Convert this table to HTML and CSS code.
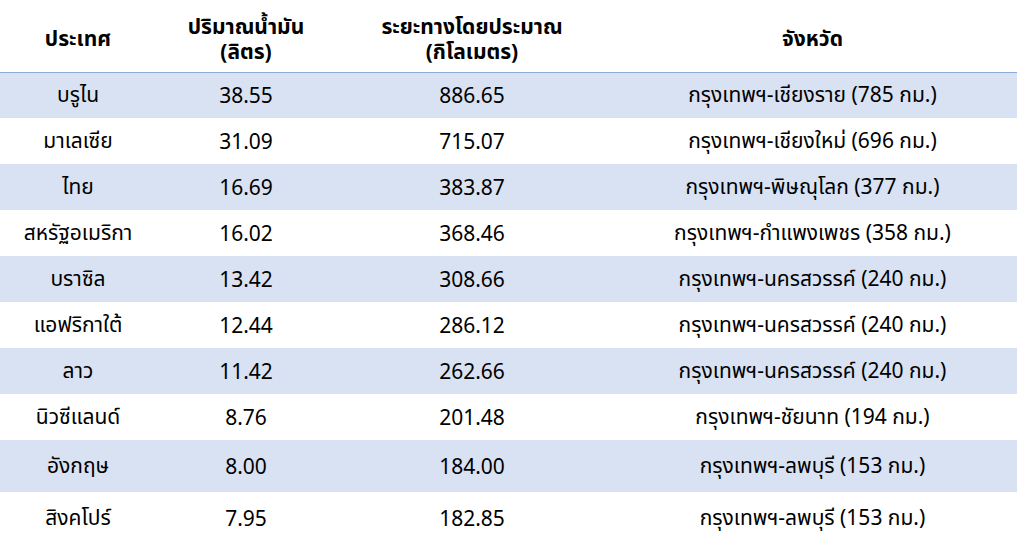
FILE: index.html
```html
<!DOCTYPE html>
<html lang="th">
<head>
<meta charset="utf-8">
<title>ปริมาณน้ำมัน</title>
<link rel="stylesheet" href="styles.css">
</head>
<body>
<table class="data">
  <colgroup>
    <col class="c1"><col class="c2"><col class="c3"><col class="c4">
  </colgroup>
  <thead>
    <tr>
      <th>ประเทศ</th>
      <th>ปริมาณน้ำมัน<br>(ลิตร)</th>
      <th>ระยะทางโดยประมาณ<br>(กิโลเมตร)</th>
      <th>จังหวัด</th>
    </tr>
  </thead>
  <tbody>
    <tr class="band"><td>บรูไน</td><td>38.55</td><td>886.65</td><td>กรุงเทพฯ-เชียงราย (785 กม.)</td></tr>
    <tr><td>มาเลเซีย</td><td>31.09</td><td>715.07</td><td>กรุงเทพฯ-เชียงใหม่ (696 กม.)</td></tr>
    <tr class="band"><td>ไทย</td><td>16.69</td><td>383.87</td><td>กรุงเทพฯ-พิษณุโลก (377 กม.)</td></tr>
    <tr><td>สหรัฐอเมริกา</td><td>16.02</td><td>368.46</td><td>กรุงเทพฯ-กำแพงเพชร (358 กม.)</td></tr>
    <tr class="band"><td>บราซิล</td><td>13.42</td><td>308.66</td><td>กรุงเทพฯ-นครสวรรค์ (240 กม.)</td></tr>
    <tr><td>แอฟริกาใต้</td><td>12.44</td><td>286.12</td><td>กรุงเทพฯ-นครสวรรค์ (240 กม.)</td></tr>
    <tr class="band"><td>ลาว</td><td>11.42</td><td>262.66</td><td>กรุงเทพฯ-นครสวรรค์ (240 กม.)</td></tr>
    <tr><td>นิวซีแลนด์</td><td>8.76</td><td>201.48</td><td>กรุงเทพฯ-ชัยนาท (194 กม.)</td></tr>
    <tr class="band tall"><td>อังกฤษ</td><td>8.00</td><td>184.00</td><td>กรุงเทพฯ-ลพบุรี (153 กม.)</td></tr>
    <tr class="tall"><td>สิงคโปร์</td><td>7.95</td><td>182.85</td><td>กรุงเทพฯ-ลพบุรี (153 กม.)</td></tr>
  </tbody>
</table>
</body>
</html>
```
FILE: styles.css
```css
html, body {
  margin: 0;
  padding: 0;
  background: #ffffff;
}
body {
  font-family: "Noto Sans", "Noto Sans Thai", "DejaVu Sans", sans-serif;
  font-size: 21px;
  color: #000000;
}
.data {
  width: 1017px;
  border-collapse: collapse;
  table-layout: fixed;
}
.c1 { width: 156px; }
.c2 { width: 180px; }
.c3 { width: 272px; }
.c4 { width: 409px; }
.data th,
.data td {
  padding: 0;
  text-align: center;
  vertical-align: middle;
}
.data thead tr {
  height: 72px;
}
.data th {
  font-weight: bold;
  line-height: 25px;
  padding-top: 6px;
  border-bottom: 1px solid #8eaadb;
}
.data tbody tr {
  height: 46px;
}
.data tbody tr.tall {
  height: 52px;
}
.data tr.band {
  background: #d9e2f3;
}
```
